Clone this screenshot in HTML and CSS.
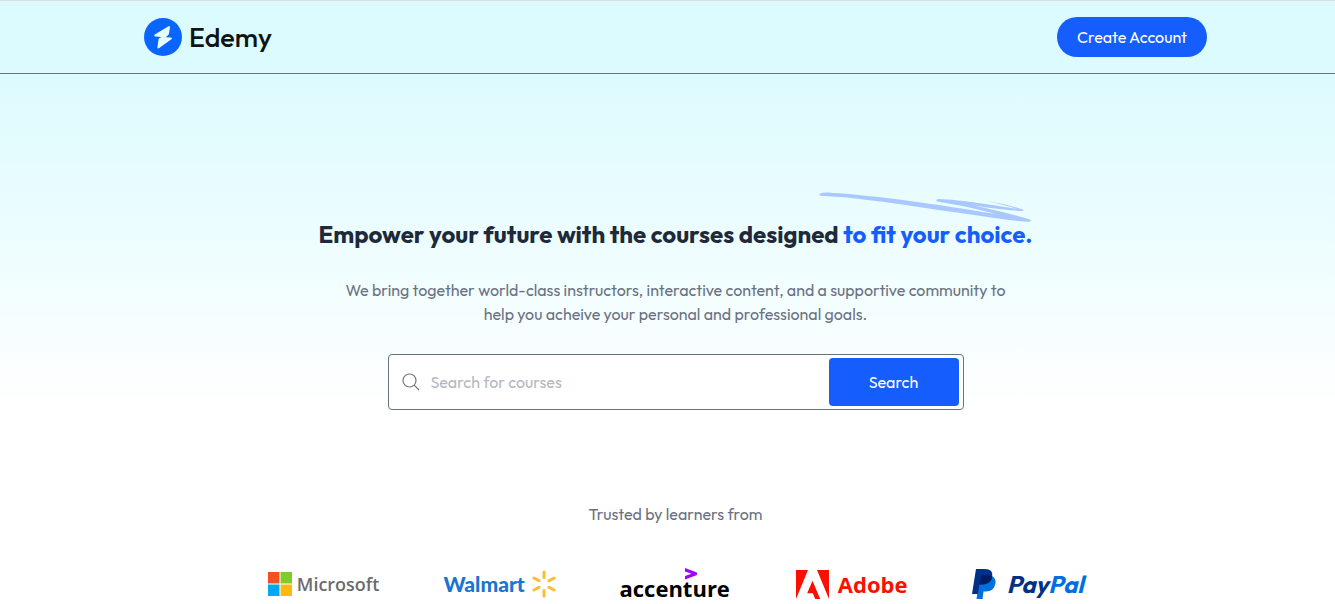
FILE: index.html
```html
<!DOCTYPE html>
<html lang="en">
<head>
<meta charset="utf-8">
<meta name="viewport" content="width=device-width, initial-scale=1">
<title>Edemy</title>
<link rel="stylesheet" href="styles.css">
</head>
<body>
<header class="navbar">
  <a class="brand" href="#">
    <svg class="brand-mark" viewBox="0 0 38 38" aria-hidden="true">
      <circle cx="19" cy="19" r="19" fill="#0a65ff"/>
      <path d="M24.500 8.200 10.800 16.400Q9.500 18.200 11.500 18.400L17.300 18.900 15.200 20.300Q14.600 20.800 14.500 21.500L13.400 29.500Q13.700 31.200 15.200 30L27.400 21.300Q28.700 19.700 26.800 19.500L21.800 19.200 24 17.300Q24.800 16.500 25 15.500L26 9.300Q25.800 7.600 24.500 8.200Z" fill="#e4fbff"/>
    </svg>
    <span class="brand-name">Edemy</span>
  </a>
  <button class="account-button" type="button">Create Account</button>
</header>
<main>
  <section class="hero">
    <h1 class="headline">Empower your future with the courses designed
      <span class="accent">to fit your choice.<svg class="swoosh" viewBox="0 0 214 32" aria-hidden="true">
        <path d="M2 2.500Q6 1 16 2C60 4.500 125 14.500 178 23C158 17.500 138 13.500 119 10.500Q117 8 122 8C142 8.500 178 15 205 18.500Q207 20 202 20C182 18.500 165 16 150 13.500C172 17.500 195 23.500 212 28.500Q215 31 208 30.800C165 26.500 90 13.500 36 7.300C22 5.800 12 5.200 4 5Q0 4.500 2 2.500Z"/>
        <path d="M168 10C182 12 194 15 205 18.500L202 19C190 15 180 12.500 168 10Z"/>
      </svg></span>
    </h1>
    <p class="lead">We bring together world-class instructors, interactive content, and a supportive community to<br>help you acheive your personal and professional goals.</p>
    <form class="search" role="search">
      <svg class="search-icon" viewBox="0 0 18 18" aria-hidden="true"><circle cx="7.500" cy="7.500" r="6.500"/><path d="M12.200 12.200 17 17"/></svg>
      <input class="search-input" type="text" placeholder="Search for courses" aria-label="Search for courses">
      <button class="search-button" type="button">Search</button>
    </form>
  </section>
  <section class="trusted">
    <p class="trusted-title">Trusted by learners from</p>
    <ul class="companies">
      <li class="company microsoft">
        <svg width="24" height="24" viewBox="0 0 24 24" aria-hidden="true"><path fill="#f25022" d="M0 0h11.500v11.500H0z"/><path fill="#7fcc28" d="M12.500 0H24v11.500H12.500z"/><path fill="#00a9ee" d="M0 12.500h11.500V24H0z"/><path fill="#fdb813" d="M12.500 12.500H24V24H12.500z"/></svg>
        <span>Microsoft</span>
      </li>
      <li class="company walmart">
        <span>Walmart</span>
        <svg width="24" height="28" viewBox="-12 -14 24 28" aria-hidden="true"><g stroke="#fdbb30" stroke-width="3" stroke-linecap="round"><path d="M0-12V-6.500M0 12V6.500M-10-6-5-3.200M10-6 5-3.200M-10 6-5 3.200M10 6 5 3.200"/></g></svg>
      </li>
      <li class="company accenture">
        <span>accenture</span>
        <svg class="accenture-mark" viewBox="0 0 12 12" aria-hidden="true"><path fill="#a100ff" d="M0 0 12 4.500V7L0 11.500V8L6.500 5.800 0 3.500Z"/></svg>
      </li>
      <li class="company adobe">
        <svg width="33" height="29" viewBox="0 0 33 29" aria-hidden="true"><path fill="#fa0f00" d="M0 0h12L0 29ZM21 0h12v29ZM16.500 10.700 24.200 29H19.200L16.800 23.200H11.200Z"/></svg>
        <span>Adobe</span>
      </li>
      <li class="company paypal">
        <svg width="24" height="30" viewBox="0 0 24 30" aria-hidden="true">
          <path fill="#0070e0" d="M8 7H20Q25 10 23 16 21 23 13 22.500L11.500 22.500 10.500 30H4.500Z"/>
          <path fill="#003087" d="M4 0H13Q21 0 20.300 7 19 15.500 10 15.500H7.500L6 25H0Z"/>
          <path fill="#001c64" d="M9.500 6.500Q15 5.500 20.300 7.200 19 15.500 10 15.500H7.500Z"/>
        </svg>
        <span>Pay<span class="pal">Pal</span></span>
      </li>
    </ul>
  </section>
</main>
</body>
</html>
```
FILE: styles.css
```css
* {
  box-sizing: border-box;
}

body {
  margin: 0;
  background: #fff;
  color: #6a7282;
  font: 16px/24px Outfit, Lato, sans-serif;
}

button,
input {
  font: inherit;
}

h1,
p,
ul {
  margin: 0;
  padding: 0;
}

.navbar {
  display: flex;
  align-items: center;
  justify-content: space-between;
  padding: 16px 128px 16px 144px;
  border-top: 1px solid #dcdedf;
  border-bottom: 1px solid #6a7282;
  background: #dcfbfe;
}

.brand {
  display: flex;
  align-items: center;
  gap: 7px;
  color: #101413;
  text-decoration: none;
}

.brand-mark {
  width: 38px;
  height: 38px;
}

.brand-name {
  font-size: 27px;
  font-weight: 500;
  line-height: 40px;
  -webkit-text-stroke: 0;
}

.account-button {
  min-width: 150px;
  height: 40px;
  padding: 0 16px;
  border: 0;
  border-radius: 20px;
  background: #155dfc;
  color: #fff;
}

.hero {
  display: flex;
  flex-direction: column;
  align-items: center;
  gap: 28px;
  padding: 144px 0 0 16px;
  background: linear-gradient(#dcfbfe, #fff);
  text-align: center;
}

.headline {
  color: #1e2939;
  font-size: 24px;
  font-weight: 700;
  line-height: 32px;
}

.accent {
  position: relative;
  color: #155dfc;
}

.swoosh {
  position: absolute;
  right: 0;
  bottom: 26px;
  width: 214px;
  height: 32px;
  fill: #a9c8ff;
}

.search {
  display: flex;
  align-items: center;
  width: 100%;
  max-width: 576px;
  padding: 3px 4px 3px 13px;
  border: 1px solid #6a7282;
  border-radius: 4px;
  background: #fff;
}

.search-icon {
  flex: none;
  width: 18px;
  height: 18px;
  fill: none;
  stroke: #777;
  stroke-width: 1.2;
}

.search-input {
  flex: 1;
  min-width: 0;
  height: 48px;
  padding: 0 11px;
  border: 0;
  outline: 0;
  background: transparent;
  color: #6a7282;
}

.search-input::placeholder {
  color: #b4b8c0;
  opacity: 1;
}

.search-button {
  width: 130px;
  height: 48px;
  border: 0;
  border-radius: 4px;
  background: #155dfc;
  color: #fff;
}

.trusted {
  padding: 92px 0 4px 16px;
  text-align: center;
}

.companies {
  display: flex;
  flex-wrap: wrap;
  justify-content: center;
  gap: 16px 64px;
  margin-top: 42px;
  list-style: none;
}

.company {
  display: flex;
  align-items: center;
  justify-content: space-between;
  position: relative;
  width: 112px;
  height: 32px;
  white-space: nowrap;
}

.company svg {
  flex: none;
}

.microsoft {
  color: #6c6c6c;
  font-family: "Open Sans", sans-serif;
  font-size: 18px;
  font-weight: 600;
}

.walmart {
  color: #1a75cf;
  font-family: Lato, sans-serif;
  font-size: 21px;
  font-weight: 900;
}

.accenture {
  align-items: flex-end;
  color: #000;
  font-family: "Open Sans", sans-serif;
  font-size: 22px;
  font-weight: 700;
}

.accenture-mark {
  position: absolute;
  top: 0;
  left: 65px;
  width: 12px;
  height: 12px;
}

.adobe {
  color: #fa0f00;
  font-family: "Open Sans", sans-serif;
  font-size: 22px;
  font-weight: 700;
}

.paypal {
  color: #003087;
  font-family: Outfit, Lato, sans-serif;
  font-size: 24px;
  font-style: italic;
  font-weight: 700;
}

.pal {
  color: #0070e0;
}
```
